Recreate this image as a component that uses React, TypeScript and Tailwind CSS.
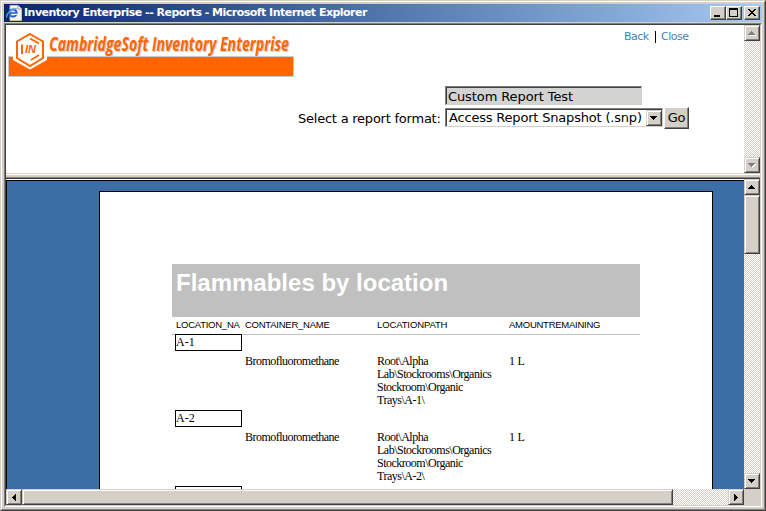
import type { ReactNode } from "react";

const raised =
  "bg-[#d4d0c8] border border-t-[#d4d0c8] border-l-[#d4d0c8] border-r-[#404040] border-b-[#404040] shadow-[inset_1px_1px_#fff,inset_-1px_-1px_#808080]";
const raisedButton =
  "bg-[#d4d0c8] border border-t-white border-l-white border-r-[#404040] border-b-[#404040] shadow-[inset_-1px_-1px_#808080]";
const track =
  "bg-[conic-gradient(#fff_25%,#d4d0c8_0_50%,#fff_0_75%,#d4d0c8_0)] bg-[length:2px_2px]";
const sunken =
  "border border-t-[#808080] border-l-[#808080] border-r-[#d4d0c8] border-b-[#d4d0c8] shadow-[inset_1px_1px_#404040]";

const arrows = {
  up: "M6 5h1v1h1v1h1v1h1v1H3V8h1V7h1V6h1z",
  down: "M3 5h7v1h-1v1H8v1H7v1H6V8H5V7H4V6H3z",
  left: "M9 4v7H8v-1H7V9H6V8H5V7h1V6h1V5h1V4z",
  right: "M5 4v7h1v-1h1V9h1V8h1V7H8V6H7V5H6V4z",
};

function ScrollButton({ dir, disabled = false }: { dir: keyof typeof arrows; disabled?: boolean }) {
  return (
    <div className={`h-4 w-4 shrink-0 ${raised}`}>
      <svg width="14" height="14" viewBox="0 0 14 14" shapeRendering="crispEdges" className="block">
        {disabled && <path d={arrows[dir]} fill="#fff" transform="translate(1 1)" />}
        <path d={arrows[dir]} fill={disabled ? "#808080" : "#000"} />
      </svg>
    </div>
  );
}

function TitleButton({ children }: { children: ReactNode }) {
  return (
    <div className={`h-[14px] w-4 ${raisedButton}`}>
      <svg width="14" height="12" viewBox="0 0 14 12" shapeRendering="crispEdges" className="block">
        {children}
      </svg>
    </div>
  );
}

function TitleBar() {
  return (
    <div className="flex h-[18px] w-[758px] items-center bg-linear-to-r from-[#0a246a] to-[#a6caf0] pr-[2px] pl-[2px]">
      <svg width="16" height="16" viewBox="0 0 16 16" className="shrink-0">
        <path d="M4 0.5h8l3.5 3.5v11.500H4z" fill="#f4f2e8" stroke="#c9c5b4" />
        <path d="M12 0.500v3.500h3.500" fill="#fff" stroke="#8e8a80" strokeWidth="0.800" />
        <circle cx="7" cy="8" r="3.600" fill="none" stroke="#1c62cc" strokeWidth="2" />
        <path d="M4 8h7" stroke="#1c62cc" strokeWidth="1.600" />
        <path d="M8.500 9.300h3" stroke="#f4f2e8" strokeWidth="1.200" />
        <path d="M1 12.500C-1 9 8 2 11 4" fill="none" stroke="#58a8f0" strokeWidth="1.200" />
      </svg>
      <span className="ml-[2px] font-['DejaVu_Sans'] text-[11px] leading-[18px] font-bold tracking-[-0.520px] whitespace-nowrap text-white">
        Inventory Enterprise -- Reports - Microsoft Internet Explorer
      </span>
      <div className="ml-auto flex">
        <TitleButton>
          <path d="M3 8h6v2H3z" />
        </TitleButton>
        <TitleButton>
          <path fillRule="evenodd" d="M2 1h9v9H2zM3 3h7v6H3z" />
        </TitleButton>
        <div className="ml-[2px]">
          <TitleButton>
            <path d="M3 2h2v1h1v1h2V3h1V2h2v1h-1v1H9v1H8v1h1v1h1v1h1v1H9V8H8V7H6v1H5v1H3V8h1V7h1V6h1V5H5V4H4V3H3z" />
          </TitleButton>
        </div>
      </div>
    </div>
  );
}

function Logo() {
  return (
    <svg width="290" height="56" viewBox="6 25 290 56" className="block">
      <rect x="8.500" y="56.500" width="285" height="20" fill="#f60" stroke="#ccc" />
      <path d="M30 29.500 47 39.500V60L30 69.500 13 60V39.500z" fill="#fff" />
      <path d="M30 34 43 41.500V58L30 66 17 58V41.500z" fill="#fff" stroke="#f60" strokeWidth="2" />
      <path d="M30 38.500 39 43.500M31 60 39 55M22 44.500V54" stroke="#f60" strokeWidth="2" />
      <text x="25" y="53" fill="#f60" textLength="11" lengthAdjust="spacingAndGlyphs" className="font-['Liberation_Sans'] text-[10px] font-bold italic">
        IN
      </text>
      <g className="font-['Open_Sans'] text-[20px] font-bold italic">
        <text x="50" y="51.500" fill="#ccc" textLength="240" lengthAdjust="spacingAndGlyphs">CambridgeSoft Inventory Enterprise</text>
        <text x="49" y="50.500" fill="#f60" textLength="240" lengthAdjust="spacingAndGlyphs">CambridgeSoft Inventory Enterprise</text>
      </g>
    </svg>
  );
}

function HeaderFrame() {
  return (
    <div className="flex h-[148px] bg-white">
      <div className="flex w-[738px] flex-col font-['DejaVu_Sans'] text-[13px] text-black">
        <div className="flex h-[56px] items-start">
          <Logo />
          <div className="mt-[5px] ml-[328px] flex items-center text-[11px] leading-3 text-[#4682b4]">
            <span className="w-[31px] pt-px tracking-[-0.550px]">Back</span>
            <span className="h-3 w-px bg-black" />
            <span className="ml-[5px] pt-px tracking-[-0.500px]">Close</span>
          </div>
        </div>
        <div className={`mt-[5px] ml-[439px] h-[19px] w-[197px] bg-[#d3d3d3] pl-[2px] leading-[19px] tracking-[-0.100px] whitespace-nowrap ${sunken}`}>
          Custom Report Test
        </div>
        <div className="mt-[2px] flex h-[22px] pl-[292px]">
          <div className="w-[147px] leading-[23px] tracking-[-0.230px] whitespace-nowrap">Select a report format:</div>
          <div className={`mt-px flex h-[19px] w-[218px] items-center bg-white pl-[3px] ${sunken}`}>
            <span className="pt-px leading-[18px] tracking-[-0.190px] whitespace-nowrap">Access Report Snapshot (.snp)</span>
            <div className="ml-auto">
              <ScrollButton dir="down" />
            </div>
          </div>
          <div className={`ml-px h-[22px] w-[25px] text-center leading-[19px] tracking-[-0.300px] ${raisedButton}`}>Go</div>
        </div>
      </div>
      <div className={`flex w-4 flex-col justify-between ${track}`}>
        <ScrollButton dir="up" disabled />
        <ScrollButton dir="down" disabled />
      </div>
    </div>
  );
}

function LocationGroup({ name }: { name: string }) {
  return (
    <div className="h-[76px] font-['Liberation_Serif'] text-[12px] leading-[13px]">
      <div className="ml-[3px] h-[17px] w-[67px] border border-black leading-[15px]">{name}</div>
      <div className="mt-1 grid grid-cols-[73px_132px_132px_1fr] whitespace-nowrap">
        <span />
        <span className="tracking-[-0.530px]">Bromofluoromethane</span>
        <span className="tracking-[-0.500px]">
          Root\Alpha
          <br />
          Lab\Stockrooms\Organics
          <br />
          Stockroom\Organic
          <br />
          Trays\{name}\
        </span>
        <span className="tracking-[-0.300px]">1 L</span>
      </div>
    </div>
  );
}

function Report() {
  return (
    <div className="ml-[92px] h-[298px] w-[614px] overflow-hidden border-x border-t border-black bg-white pt-[72px] pl-[72px] text-black">
      <div className="w-[468px]">
        <div className="h-[53px] bg-[#c0c0c0] pl-1 font-['Liberation_Sans'] text-[24px] leading-[38px] font-bold whitespace-nowrap text-white">
          Flammables by location
        </div>
        <div className="grid h-[18px] grid-cols-[69px_132px_132px_1fr] border-b border-[#c0c0c0] pl-1 font-['Liberation_Sans'] text-[9.5px] leading-[16px] tracking-[-0.250px] whitespace-nowrap">
          <span>LOCATION_NA</span>
          <span>CONTAINER_NAME</span>
          <span className="tracking-[-0.120px]">LOCATIONPATH</span>
          <span>AMOUNTREMAINING</span>
        </div>
        <div className="-mt-px">
          <LocationGroup name="A-1" />
          <LocationGroup name="A-2" />
          <div className="ml-[3px] h-[17px] w-[67px] border border-black" />
        </div>
      </div>
    </div>
  );
}

function ReportFrame() {
  return (
    <div className="flex h-[326px] flex-col">
      <div className="flex h-[310px]">
        <div className="w-[738px] border-t border-white">
          <div className="h-[309px] overflow-hidden border-t border-l border-black bg-[#3a6ea5] pt-[10px]">
            <Report />
          </div>
        </div>
        <div className={`flex w-4 flex-col ${track}`}>
          <ScrollButton dir="up" />
          <div className={`h-[59px] ${raised}`} />
          <div className="mt-auto">
            <ScrollButton dir="down" />
          </div>
        </div>
      </div>
      <div className="flex h-4">
        <div className={`flex w-[738px] ${track}`}>
          <ScrollButton dir="left" />
          <div className={`h-4 w-[651px] ${raised}`} />
          <div className="ml-auto">
            <ScrollButton dir="right" />
          </div>
        </div>
        <div className="w-4 bg-[#d4d0c8]" />
      </div>
    </div>
  );
}

export default function App() {
  return (
    <div className="h-[511px] w-[766px] overflow-hidden border border-t-[#d4d0c8] border-r-[#404040] border-b-[#404040] border-l-[#d4d0c8] bg-[#d4d0c8]">
      <div className="h-[509px] w-[764px] border border-t-white border-r-[#808080] border-b-[#808080] border-l-white pt-[2px] pl-[2px]">
        <TitleBar />
        <div className="mt-px h-[484px] w-[758px] border border-t-[#808080] border-r-white border-b-white border-l-[#808080]">
          <div className="h-[482px] w-[756px] border border-t-[#404040] border-r-[#d4d0c8] border-b-[#d4d0c8] border-l-[#404040]">
            <HeaderFrame />
            <div className="h-[6px] border-t border-b border-t-[#d4d0c8] border-b-[#404040]">
              <div className="h-1 border-t border-b border-t-white border-b-[#808080] bg-[#d4d0c8]" />
            </div>
            <ReportFrame />
          </div>
        </div>
      </div>
    </div>
  );
}
